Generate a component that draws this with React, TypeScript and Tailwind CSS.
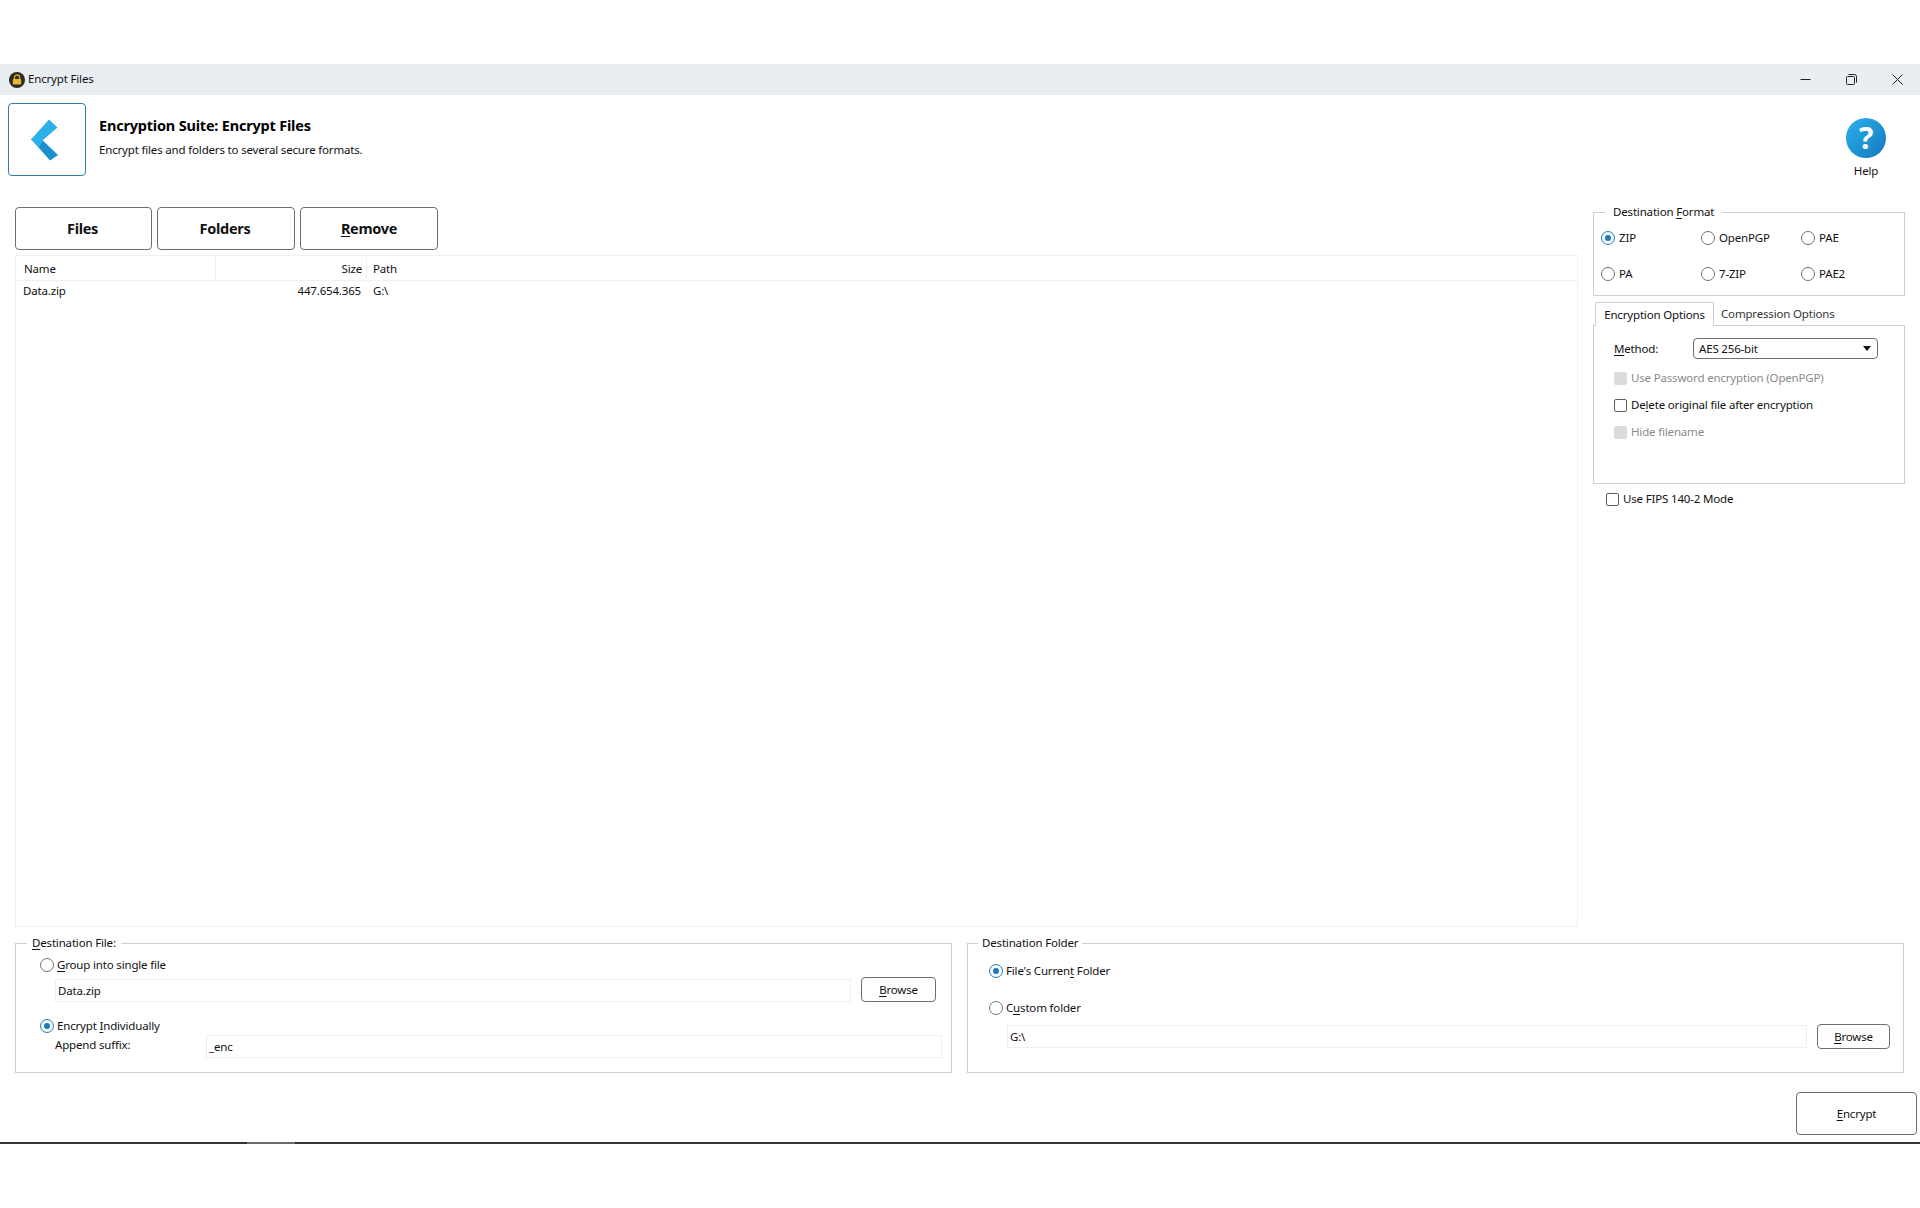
import React from "react";

const U = ({ children }: { children: React.ReactNode }) => <span className="underline underline-offset-2 decoration-1">{children}</span>;

function Radio({ on }: { on?: boolean }) {
  return (
    <span className={"flex h-[14px] w-[14px] shrink-0 items-center justify-center rounded-full border " + (on ? "border-[#2a7fb8] bg-[#f2f8fc]" : "border-[#707070] bg-white")}>
      {on && <span className="h-[6px] w-[6px] rounded-full bg-[#1f78b8]" />}
    </span>
  );
}

function Check({ disabled }: { disabled?: boolean }) {
  return <span className={"block h-[13px] w-[13px] shrink-0 rounded-[2px] border " + (disabled ? "border-[#dcdcdc] bg-[#dcdcdc]" : "border-[#5f5f5f] bg-white")} />;
}

const Field = ({ children, className }: { children: React.ReactNode; className: string }) => (
  <div className={"flex h-[23px] items-center border border-[#efefef] pl-[2px] " + className}>{children}</div>
);

const Btn = ({ children, className }: { children: React.ReactNode; className: string }) => (
  <button className={"flex items-center justify-center rounded-[4px] border border-[#6e6e6e] bg-white " + className}>{children}</button>
);

export default function App() {
  return (
    <div className="h-[1208px] w-[1920px] overflow-hidden bg-white pt-[64px] text-[11.5px] leading-[18px] tracking-[-0.17px] text-[#111]" style={{ fontFamily: '"Noto Sans", sans-serif' }}>
      <div className="flex h-[1078px] flex-col">
        {/* title bar */}
        <div className="flex h-[31px] shrink-0 items-center bg-[#e9eef2] pl-[9px] pr-[17px]">
          <svg width="16" height="16" viewBox="0 0 16 16" className="mr-[3px]">
            <circle cx="8" cy="8" r="8" fill="#2b2a26" />
            <path d="M5.4 7V5.6a2.6 2.6 0 0 1 5.2 0V7" fill="none" stroke="#d9a92c" strokeWidth="1.3" />
            <rect x="3.8" y="7" width="8.4" height="5.6" rx="1" fill="#e8b72f" />
          </svg>
          <span className="pb-[1px]">Encrypt Files</span>
          <div className="ml-auto flex items-center gap-[35px]">
            <svg width="11" height="11" viewBox="0 0 11 11"><path d="M0.5 5.5h10" stroke="#222" /></svg>
            <svg width="11" height="11" viewBox="0 0 11 11" fill="none" stroke="#222"><rect x="0.5" y="2.5" width="8" height="8" rx="1" /><path d="M2.5 0.5h6a2 2 0 0 1 2 2v6" /></svg>
            <svg width="11" height="11" viewBox="0 0 11 11" stroke="#222"><path d="M0.5 0.5l10 10M10.5 0.5l-10 10" /></svg>
          </div>
        </div>

        {/* header */}
        <div className="flex h-[108px] shrink-0 pl-[8px] pr-[34px] pt-[8px]">
          <div className="flex h-[73px] w-[78px] items-center justify-center rounded-[4px] border border-[#2f7ea6]">
            <svg width="28" height="42" viewBox="0 0 28 42" className="-translate-x-[2px]">
              <path d="M0 20L7 17L27 36L19 41.500Z" fill="#1b90cf" />
              <path d="M0 20.500L18 0.500L26.500 8.500L12 21L8 28.500Z" fill="#2bb0e8" />
            </svg>
          </div>
          <div className="ml-[13px] pt-[12px]">
            <div className="text-[14.5px] font-bold leading-[20px] tracking-[-0.2px] text-black">Encryption Suite: Encrypt Files</div>
            <div className="mt-[6px] leading-[18px]">Encrypt files and folders to several secure formats.</div>
          </div>
          <div className="ml-auto flex w-[40px] flex-col items-center pt-[15px]">
            <div className="flex h-[40px] w-[40px] items-center justify-center rounded-full bg-gradient-to-br from-[#2bb2ec] to-[#1478bd] text-[30px] font-bold leading-none text-white">?</div>
            <div className="mt-[4px]">Help</div>
          </div>
        </div>

        {/* main */}
        <div className="flex h-[724px] shrink-0 pl-[15px]">
          <div className="flex w-[1563px] flex-col pt-[4px]">
            <div className="flex gap-[5px] text-[14.5px] font-bold tracking-[-0.3px]">
              <Btn className="h-[43px] w-[137px] pb-[2px] pr-[2px]">Files</Btn>
              <Btn className="h-[43px] w-[138px] pb-[2px] pr-[2px]">Folders</Btn>
              <Btn className="h-[43px] w-[138px] pb-[2px]"><span><U>R</U>emove</span></Btn>
            </div>
            <div className="mt-[5px] flex-1 border border-[#f0f0f0]">
              <div className="flex h-[25px] items-center border-b border-[#f0f0f0]">
                <div className="flex h-full w-[200px] items-center border-r border-[#f0f0f0] pl-[8px] pt-[2px]">Name</div>
                <div className="flex h-full w-[151px] items-center justify-end border-r border-[#f0f0f0] pr-[4px] pt-[2px]">Size</div>
                <div className="pl-[6px] pt-[2px]">Path</div>
              </div>
              <div className="flex h-[20px] items-center">
                <div className="w-[200px] pl-[7px]">Data.zip</div>
                <div className="w-[151px] pr-[6px] text-right">447.654.365</div>
                <div className="pl-[6px]">G:\</div>
              </div>
            </div>
          </div>

          <div className="ml-[15px] w-[312px]">
            <fieldset className="h-[93px] min-w-0 border border-[#cfcfcf]">
              <legend className="ml-[11px] px-[8px]">Destination <U>F</U>ormat</legend>
              <div className="mt-[10px] grid grid-cols-[100px_100px_100px] gap-y-[22px] pl-[7px]">
                {[["ZIP", true], ["OpenPGP"], ["PAE"], ["PA"], ["7-ZIP"], ["PAE2"]].map(([t, on]) => (
                  <label key={t as string} className="flex h-[14px] items-center gap-[4px]"><Radio on={!!on} />{t}</label>
                ))}
              </div>
            </fieldset>
            <div className="mt-[6px] flex h-[23px] items-end pl-[2px]">
              <div className="relative z-10 -mb-px flex h-[24px] w-[119px] items-center justify-center border border-b-0 border-[#cfcfcf] bg-white">Encryption Options</div>
              <div className="flex h-[22px] items-center pl-[7px] text-[#333]">Compression Options</div>
            </div>
            <div className="h-[159px] border border-[#cfcfcf] pl-[20px] pt-[12px]">
              <div className="flex h-[21px] items-center">
                <span className="w-[79px]"><U>M</U>ethod:</span>
                <div className="flex h-[21px] w-[185px] items-center justify-between rounded-[4px] border border-[#6e6e6e] pl-[5px] pr-[6px]">
                  AES 256-bit
                  <svg width="8" height="5" viewBox="0 0 8 5"><path d="M0 0h8L4 5z" fill="#111" /></svg>
                </div>
              </div>
              <div className="mt-[10px] flex h-[18px] items-center gap-[4px] text-[#8a8a8a]"><Check disabled />Use Password encryption (OpenPGP)</div>
              <div className="mt-[9px] flex h-[18px] items-center gap-[4px]"><Check /><span>De<U>l</U>ete original file after encryption</span></div>
              <div className="mt-[9px] flex h-[18px] items-center gap-[4px] text-[#8a8a8a]"><Check disabled />Hide filename</div>
            </div>
            <div className="mt-[6px] flex h-[18px] items-center gap-[4px] pl-[13px]"><Check />Use FIPS 140-2 Mode</div>
          </div>
        </div>

        {/* bottom groups */}
        <div className="mt-[7px] flex shrink-0 gap-[15px] pl-[15px]">
          <fieldset className="h-[139px] w-[937px] min-w-0 border border-[#cfcfcf]">
            <legend className="ml-[11px] px-[5px]"><U>D</U>estination File:</legend>
            <div className="mt-[4px] flex h-[18px] items-center gap-[3px] pl-[24px]"><Radio /><span><U>G</U>roup into single file</span></div>
            <div className="mt-[-1px] flex items-end pl-[39px] pt-[4px]">
              <Field className="w-[796px]">Data.zip</Field>
              <Btn className="ml-[10px] h-[25px] w-[75px]"><span><U>B</U>rowse</span></Btn>
            </div>
            <div className="mt-[15px] flex h-[18px] items-center gap-[3px] pl-[24px]"><Radio on /><span>Encrypt <U>I</U>ndividually</span></div>
            <div className="flex pl-[39px] pt-[1px]">
              <span className="w-[151px]">Append suffix:</span>
              <Field className="-mt-[1px] w-[736px]">_enc</Field>
            </div>
          </fieldset>
          <fieldset className="h-[139px] w-[937px] min-w-0 border border-[#cfcfcf]">
            <legend className="ml-[10px] px-[4px]">Destination Folder</legend>
            <div className="mt-[10px] flex h-[18px] items-center gap-[3px] pl-[21px]"><Radio on /><span>File's Curren<U>t</U> Folder</span></div>
            <div className="mt-[19px] flex h-[18px] items-center gap-[3px] pl-[21px]"><Radio /><span>C<U>u</U>stom folder</span></div>
            <div className="mt-[7px] flex items-center pl-[39px]">
              <Field className="w-[800px]">G:\</Field>
              <Btn className="ml-[10px] h-[25px] w-[73px]"><span><U>B</U>rowse</span></Btn>
            </div>
          </fieldset>
        </div>

        <div className="mt-[19px] flex justify-end pr-[3px]">
          <Btn className="h-[43px] w-[121px]"><span><U>E</U>ncrypt</span></Btn>
        </div>
      </div>
      {/* window bottom edge */}
      <div className="flex h-[2px]">
        <div className="w-[247px] bg-[#333]" />
        <div className="w-[48px] bg-[#6a6a6a]" />
        <div className="flex-1 bg-[#333]" />
      </div>
    </div>
  );
}
